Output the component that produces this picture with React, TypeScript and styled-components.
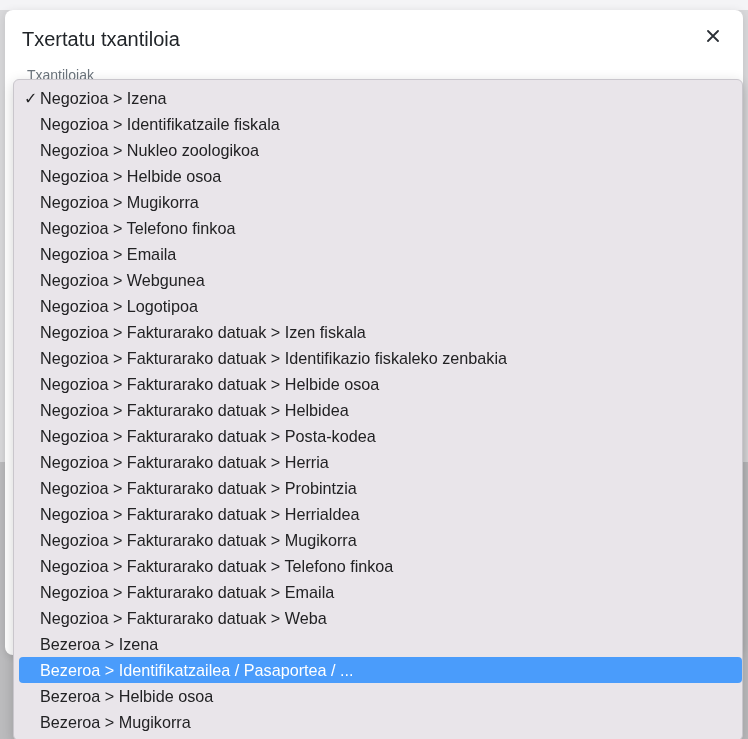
import { createGlobalStyle } from "styled-components";
import styled from "styled-components";

const GlobalStyle = createGlobalStyle`
  html, body {
    margin: 0;
    height: 100%;
    overflow: hidden;
  }
  body {
    font-family: "Liberation Sans", Arial, sans-serif;
    background: linear-gradient(
      to bottom,
      #f4f4f6 0px,
      #f4f4f6 10px,
      #d9d9db 10px,
      #d9d9db 462px,
      #bcbcbe 462px
    );
  }
`;

const templates = [
  "Negozioa > Izena",
  "Negozioa > Identifikatzaile fiskala",
  "Negozioa > Nukleo zoologikoa",
  "Negozioa > Helbide osoa",
  "Negozioa > Mugikorra",
  "Negozioa > Telefono finkoa",
  "Negozioa > Emaila",
  "Negozioa > Webgunea",
  "Negozioa > Logotipoa",
  "Negozioa > Fakturarako datuak > Izen fiskala",
  "Negozioa > Fakturarako datuak > Identifikazio fiskaleko zenbakia",
  "Negozioa > Fakturarako datuak > Helbide osoa",
  "Negozioa > Fakturarako datuak > Helbidea",
  "Negozioa > Fakturarako datuak > Posta-kodea",
  "Negozioa > Fakturarako datuak > Herria",
  "Negozioa > Fakturarako datuak > Probintzia",
  "Negozioa > Fakturarako datuak > Herrialdea",
  "Negozioa > Fakturarako datuak > Mugikorra",
  "Negozioa > Fakturarako datuak > Telefono finkoa",
  "Negozioa > Fakturarako datuak > Emaila",
  "Negozioa > Fakturarako datuak > Weba",
  "Bezeroa > Izena",
  "Bezeroa > Identifikatzailea / Pasaportea / ...",
  "Bezeroa > Helbide osoa",
  "Bezeroa > Mugikorra",
];

const SELECTED = 0;
const HOVERED = 22;

const Modal = styled.div`
  position: fixed;
  top: 10px;
  left: 5px;
  width: 738px;
  height: 645px;
  background: #ffffff;
  border-radius: 8px;
  box-shadow: 0 2px 10px rgba(0, 0, 0, 0.12);
`;

const Header = styled.div`
  display: flex;
  align-items: center;
  justify-content: space-between;
  padding: 14px 20px 0 17px;
  height: 30px;
`;

const Title = styled.h5`
  margin: 0;
  font-size: 20px;
  font-weight: 400;
  color: #212529;
  line-height: 30px;
`;

const Close = styled.button`
  border: 0;
  background: transparent;
  padding: 0;
  width: 20px;
  height: 20px;
  display: flex;
  align-items: center;
  justify-content: center;
  margin-top: -6px;
  cursor: pointer;
`;

const Body = styled.div`
  padding: 12px 22px 0 22px;
`;

const Label = styled.label`
  display: block;
  font-size: 14px;
  color: #6c757d;
  line-height: 18px;
`;

const Menu = styled.ul`
  position: fixed;
  top: 79px;
  left: 13px;
  width: 723px;
  margin: 0;
  padding: 5px 0 5px 5px;
  list-style: none;
  background: #e9e5ea;
  border: 1px solid #c9c6cc;
  border-radius: 6px;
  box-shadow: 0 4px 14px rgba(0, 0, 0, 0.18);
`;

const Item = styled.li<{ $active?: boolean }>`
  display: flex;
  align-items: center;
  height: 26px;
  padding-left: 5px;
  border-radius: 4px;
  font-size: 16.2px;
  color: ${(p) => (p.$active ? "#ffffff" : "#222224")};
  background: ${(p) => (p.$active ? "#4a9cfb" : "transparent")};
  white-space: nowrap;
`;

const Check = styled.span`
  display: inline-block;
  width: 16px;
  font-family: "DejaVu Sans", sans-serif;
  font-size: 16px;
  font-weight: 700;
`;

export default function App() {
  return (
    <>
      <GlobalStyle />
      <Modal>
        <Header>
          <Title>Txertatu txantiloia</Title>
          <Close aria-label="Itxi">
            <svg width="12" height="12" viewBox="0 0 12 12">
              <path
                d="M1 1 L11 11 M11 1 L1 11"
                stroke="#2b3036"
                strokeWidth="1.8"
                strokeLinecap="round"
              />
            </svg>
          </Close>
        </Header>
        <Body>
          <Label>Txantiloiak</Label>
        </Body>
      </Modal>
      <Menu>
        {templates.map((t, i) => (
          <Item key={t} $active={i === HOVERED}>
            <Check>{i === SELECTED ? "✓" : ""}</Check>
            {t}
          </Item>
        ))}
      </Menu>
    </>
  );
}
